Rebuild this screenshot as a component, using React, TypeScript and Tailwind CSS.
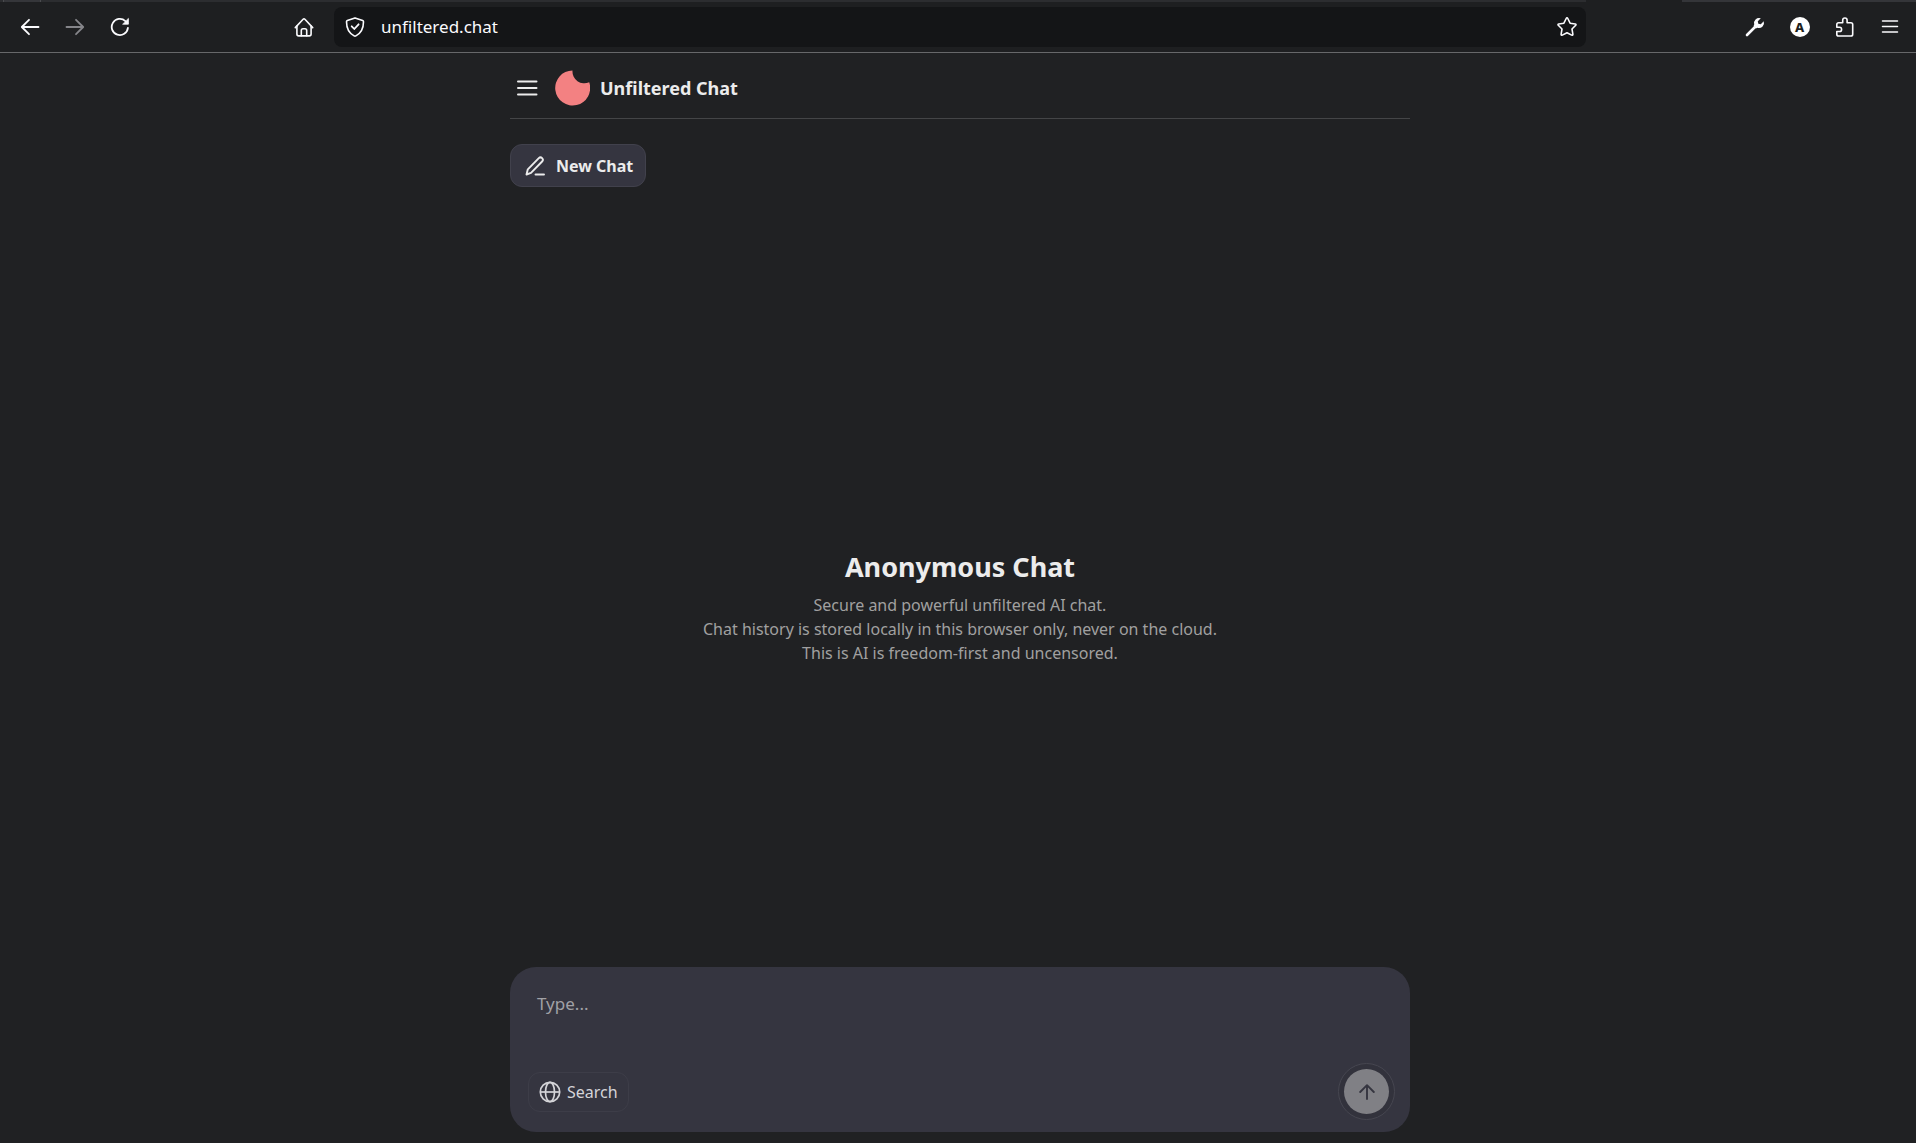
import React from 'react';

interface IconButtonProps {
  label: string;
  dim?: boolean;
  children: React.ReactNode;
}

const IconButton: React.FC<IconButtonProps> = ({ label, dim, children }) => (
  <button
    type="button"
    aria-label={label}
    className={`flex h-10 w-[45px] shrink-0 items-center justify-center ${dim ? 'text-[#85858a]' : 'text-[#fbfbfe]'}`}
  >
    {children}
  </button>
);

interface IconProps {
  className?: string;
  strokeWidth?: number;
  children: React.ReactNode;
}

// 20x20 outline icon used across the toolbar
const Icon: React.FC<IconProps> = ({ className = 'size-5', strokeWidth = 1.6, children }) => (
  <svg
    viewBox="0 0 20 20"
    fill="none"
    stroke="currentColor"
    strokeWidth={strokeWidth}
    strokeLinecap="round"
    strokeLinejoin="round"
    className={className}
    aria-hidden="true"
  >
    {children}
  </svg>
);

const BrowserBar: React.FC = () => {
  return (
    <div className="border-b border-[#67686a] bg-[#1e1f21]">
      {/* Bottom edge of the tab strip */}
      <div className="flex h-0.5 bg-[#2c2d30]">
        <div className="ml-[3px] w-[38px] border-x border-[#4a4b4e] bg-[#35363a]" />
        <div className="flex-1" />
        <div className="w-24 bg-[#1e1f21]" />
        <div className="w-[234px] bg-[#343539]" />
      </div>

      <div className="flex items-center py-[5px] pr-1 pl-[7px]">
        <IconButton label="Back">
          <Icon strokeWidth={1.8}>
            <path d="M18.500 10H2M9 2.800 1.800 10 9 17.200" />
          </Icon>
        </IconButton>
        <IconButton label="Forward" dim>
          <Icon strokeWidth={1.8}>
            <path d="M1.500 10H18M11 2.800 18.200 10 11 17.200" />
          </Icon>
        </IconButton>
        <IconButton label="Reload">
          <Icon strokeWidth={1.8}>
            <path d="M17.900 10.800A8.100 8.100 0 1 1 15.400 4.100" />
            <path d="M18.400 1.800v5.400h-5.400z" fill="currentColor" strokeWidth="0.8" />
          </Icon>
        </IconButton>

        <div className="w-[139px] shrink" />

        <IconButton label="Home">
          <Icon>
            <path d="M1.300 10.600 9.100 2.300q.9-.9 1.800 0l7.800 8.300" />
            <path d="M2.900 9v8.100q0 1.800 1.800 1.800h10.600q1.800 0 1.800-1.800V9" />
            <path d="M7.300 18.700v-5.200q0-1.700 1.700-1.700h2q1.700 0 1.700 1.700v5.200" />
          </Icon>
        </IconButton>

        <div className="ml-2 flex h-10 min-w-0 flex-1 items-center rounded-lg bg-[#141517] pr-[9px] pl-[11px] text-[#fbfbfe]">
          <Icon className="size-5 shrink-0">
            <path d="M10 .9 17.700 3.600q.8.3.8 1.100c0 7-2.700 11.500-7.600 14.200q-.9.5-1.800 0C4.200 16.200 1.500 11.700 1.500 4.700q0-.8.8-1.100z" />
            <path d="m6.700 9.300 2.600 2.700 4.300-4.700" strokeWidth="1.8" />
          </Icon>
          <input
            type="text"
            aria-label="Address"
            defaultValue="unfiltered.chat"
            className="ml-4 min-w-0 flex-1 bg-transparent text-[17px] leading-6 outline-none"
          />
          <button type="button" aria-label="Bookmark this page">
            <Icon>
              <path d="M10 .9q.5 0 .8.6l2.300 4.700 5.100.8q1.300.3.5 1.300l-3.700 3.700.9 5.300q0 1.300-1.200.8L10 15.700l-4.700 2.400q-1.200.5-1.200-.8L5 12 1.300 8.300q-.8-1 .5-1.300l5.100-.8 2.300-4.700q.3-.6.8-.6z" />
            </Icon>
          </button>
        </div>

        <div className="w-[146px] shrink" />

        <IconButton label="Developer tools">
          <svg viewBox="0 0 20 20" className="size-5" aria-hidden="true">
            <path d="M2 18 11.500 8.500" stroke="currentColor" strokeWidth="2.600" strokeLinecap="round" />
            <path
              d="M15.800 1.300A5.100 5.100 0 0 0 9.200 7.600l-.6 1.500 2.300 2.300 1.500-.6A5.100 5.100 0 0 0 18.700 4.200l-2.900 3-2.500-.5-.5-2.500z"
              fill="currentColor"
            />
          </svg>
        </IconButton>
        <IconButton label="Account">
          <span className="flex size-5 items-center justify-center rounded-full bg-white text-[13px] leading-5 font-extrabold text-[#1e1f21]">
            A
          </span>
        </IconButton>
        <IconButton label="Extensions">
          <Icon>
            <path d="M7.700 5.700V3.200a2.200 2.200 0 0 1 4.400 0v2.500h3.800q1.800 0 1.800 1.800v9.700q0 1.800-1.800 1.800H3.600q-1.800 0-1.800-1.800v-2.700h2.700a2 2 0 0 0 0-4.200H1.800V7.500q0-1.800 1.800-1.800z" />
          </Icon>
        </IconButton>
        <IconButton label="Application menu">
          <Icon strokeWidth={1.5}>
            <path d="M2.500 4h15M2.500 9.500h15M2.500 15h15" />
          </Icon>
        </IconButton>
      </div>
    </div>
  );
};

const ChatHeader: React.FC = () => {
  return (
    <header className="flex h-[66px] items-center border-b border-[#444547] pt-[5px]">
      <button type="button" aria-label="Open menu" className="ml-1.5 text-[#ececec]">
        <svg viewBox="0 0 22 22" stroke="currentColor" strokeWidth="2" strokeLinecap="round" className="size-[22px]" aria-hidden="true">
          <path d="M2 4.500h18.500M2 11h18.500M2 17.500h18.500" />
        </svg>
      </button>
      {/* Crescent logo */}
      <svg viewBox="0 0 36 36" className="ml-4 size-9" aria-hidden="true">
        <path d="M18.500 .5A17.500 17.500 0 1 0 35.200 12.200A11.800 11.800 0 0 1 18.500 .5Z" fill="#f38182" />
      </svg>
      <h1 className="ml-2.5 text-lg font-bold text-[#ececec]">Unfiltered Chat</h1>
    </header>
  );
};

const Composer: React.FC = () => {
  return (
    <form
      className="rounded-[26px] bg-[#353540] px-[15px] pt-[21px] pb-3"
      onSubmit={(e) => e.preventDefault()}
    >
      <textarea
        aria-label="Message"
        placeholder="Type..."
        className="block h-[75px] w-full resize-none bg-transparent px-3 py-1 text-[17px] leading-6 text-[#ececec] outline-none placeholder:text-[#a1a1a6]"
      />
      <div className="flex items-center justify-between">
        <button
          type="button"
          className="ml-[3px] flex h-10 items-center gap-1.5 rounded-xl border border-[#3d3d48] px-2.5 text-base text-[#d4d4d8]"
        >
          <svg viewBox="0 0 22 22" fill="none" stroke="currentColor" strokeWidth="1.700" className="size-[22px]" aria-hidden="true">
            <circle cx="11" cy="11" r="9.700" />
            <ellipse cx="11" cy="11" rx="4.500" ry="9.700" />
            <path d="M1.300 11h19.400" />
          </svg>
          Search
        </button>
        <button
          type="submit"
          aria-label="Send message"
          className="flex size-[57px] items-center justify-center rounded-full border border-[#464650] bg-[#32323c]"
        >
          <span className="flex size-[45px] items-center justify-center rounded-full bg-[#808085] text-[#353540]">
            <svg viewBox="0 0 16 16" fill="none" stroke="currentColor" strokeWidth="1.900" strokeLinecap="round" strokeLinejoin="round" className="size-4" aria-hidden="true">
              <path d="M8 15V1.200M1.200 8 8 1.200 14.800 8" />
            </svg>
          </span>
        </button>
      </div>
    </form>
  );
};

export default function App() {
  return (
    <div className="flex min-h-screen flex-col bg-[#202123] font-['Noto_Sans',sans-serif]">
      <BrowserBar />

      <main className="flex flex-1 flex-col pl-1">
        <div className="mx-auto flex w-full max-w-[900px] flex-1 flex-col pb-[11px]">
          <ChatHeader />

          <div className="pt-[25px]">
            <button
              type="button"
              className="flex h-[43px] items-center gap-[11px] rounded-xl border border-[#41414c] bg-[#353540] pr-3 pl-3.5 text-base font-bold text-[#ececec]"
            >
              <svg viewBox="0 0 20 20" fill="none" stroke="currentColor" strokeWidth="1.900" strokeLinecap="round" strokeLinejoin="round" className="size-5" aria-hidden="true">
                <path d="M1.500 18.500 2.800 13.300 13.800 2.200a2.300 2.300 0 0 1 3.300 3.300L6 16.800Z" />
                <path d="M10.500 18.500h8.500" />
              </svg>
              New Chat
            </button>
          </div>

          <section className="flex flex-1 flex-col items-center justify-center pt-[60px] text-center">
            <h2 className="text-[27px] leading-9 font-bold text-[#ececec]">Anonymous Chat</h2>
            <p className="mt-2 text-base leading-6 text-[#a0a0a0]">
              Secure and powerful unfiltered AI chat.
              <br />
              Chat history is stored locally in this browser only, never on the cloud.
              <br />
              This is AI is freedom-first and uncensored.
            </p>
          </section>

          <Composer />
        </div>
      </main>
    </div>
  );
}
